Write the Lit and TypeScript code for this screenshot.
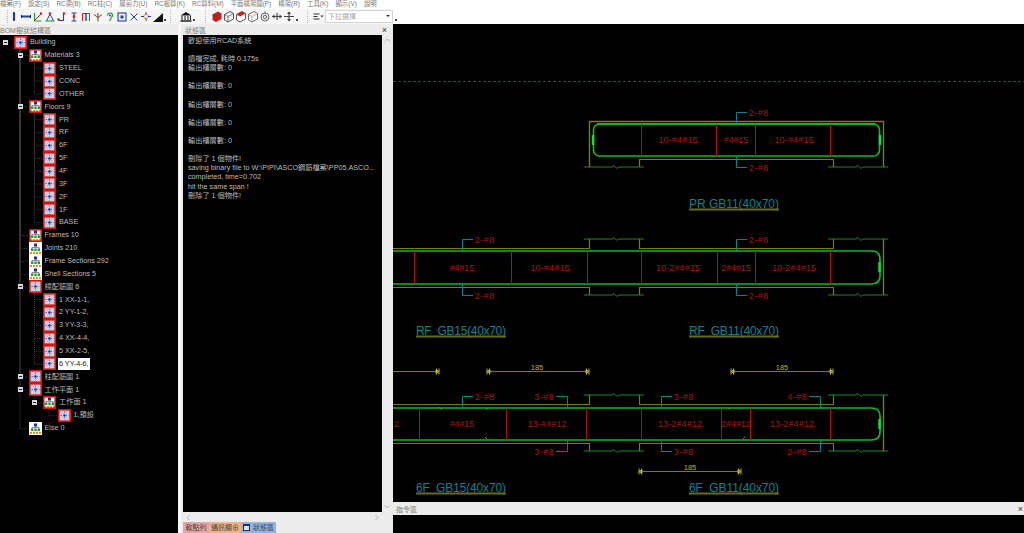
import { LitElement, css, html, svg, nothing } from 'lit';
import { customElement } from 'lit/decorators.js';

type Node = { label: string; level: number; icon: 'spark' | 'tree'; red?: boolean; exp?: boolean; sel?: boolean };

const nodes: Node[] = [
  { label: 'Building', level: 0, icon: 'spark', red: true, exp: true },
  { label: 'Materials 3', level: 1, icon: 'tree', red: true, exp: true },
  { label: 'STEEL', level: 2, icon: 'spark', red: true },
  { label: 'CONC', level: 2, icon: 'spark', red: true },
  { label: 'OTHER', level: 2, icon: 'spark', red: true },
  { label: 'Floors 9', level: 1, icon: 'tree', red: true, exp: true },
  ...['PR', 'RF', '6F', '5F', '4F', '3F', '2F', '1F', 'BASE'].map(
    (label): Node => ({ label, level: 2, icon: 'spark', red: true })
  ),
  { label: 'Frames 10', level: 1, icon: 'tree', red: true },
  { label: 'Joints 210', level: 1, icon: 'tree' },
  { label: 'Frame Sections 292', level: 1, icon: 'tree' },
  { label: 'Shell Sections 5', level: 1, icon: 'tree' },
  { label: '樑配筋圖 6', level: 1, icon: 'spark', red: true, exp: true },
  { label: '1 XX-1-1,', level: 2, icon: 'spark', red: true },
  { label: '2 YY-1-2,', level: 2, icon: 'spark', red: true },
  { label: '3 YY-3-3,', level: 2, icon: 'spark', red: true },
  { label: '4 XX-4-4,', level: 2, icon: 'spark', red: true },
  { label: '5 XX-2-5,', level: 2, icon: 'spark', red: true },
  { label: '6 YY-4-6,', level: 2, icon: 'spark', red: true, sel: true },
  { label: '柱配筋圖 1', level: 1, icon: 'spark', red: true, exp: true },
  { label: '工作平面 1', level: 1, icon: 'spark', red: true, exp: true },
  { label: '工作面 1', level: 2, icon: 'tree', red: true, exp: true },
  { label: '1,預設', level: 3, icon: 'spark', red: true },
  { label: 'Else 0', level: 1, icon: 'tree' },
];

const ROW = 12.87;

const sparkIcon = svg`<rect x="-1" y="-1" width="13" height="13" fill="#ccd0e0"/>
  <path d="M5.5 1.5v8M1.5 5.5h8" stroke="#3a50d8" stroke-width=".8" stroke-dasharray="1.5 1"/>
  <path d="M3 3l5 5M8 3l-5 5" stroke="#a2aadc" stroke-width=".6"/>
  <rect x="4.6" y="4.6" width="1.8" height="1.8" fill="#1424c4"/>`;

const treeIcon = svg`<rect x="-1" y="-1" width="13" height="13" fill="#fff"/>
  <rect x="4" y="0.5" width="3" height="3" fill="#1a2a9a"/>
  <path d="M5.5 3.5v1M2 6V4.5h7V6" stroke="#444" stroke-width=".6" fill="none"/>
  <rect x="1" y="5.5" width="2.4" height="2.6" fill="#18a030"/>
  <rect x="4.3" y="5.5" width="2.4" height="2.6" fill="#18a030"/>
  <rect x="7.6" y="5.5" width="2.4" height="2.6" fill="#18a030"/>
  <path d="M0 10h11" stroke="#e89020" stroke-width="1.8" stroke-dasharray="2 1"/>`;

@customElement('rcad-tree')
class RcadTree extends LitElement {
  static styles = css`
    :host {
      display: block;
      position: relative;
      height: 100%;
      background: #000;
      padding-top: 1px;
      box-sizing: border-box;
      overflow: hidden;
    }
    .guides {
      position: absolute;
      left: 0;
      top: 1px;
    }
    .row {
      position: relative;
      display: flex;
      align-items: center;
      height: 12.87px;
      font-size: 7.2px;
      color: #bcbcbc;
      white-space: nowrap;
    }
    .exp {
      width: 5px;
      height: 5px;
      margin-right: 6px;
      background: #d8d8e0;
      flex: none;
      position: relative;
    }
    .exp.none {
      background: none;
    }
    .exp:not(.none)::after {
      content: '';
      position: absolute;
      left: 1px;
      right: 1px;
      top: 2px;
      height: 1px;
      background: #222;
    }
    .icon {
      width: 13px;
      height: 13px;
      flex: none;
      margin-right: 2px;
      display: block;
    }
    .label {
      padding: 0 1px;
      line-height: 12px;
    }
    .label.sel {
      background: #fff;
      color: #222;
    }
  `;

  guides() {
    const out: unknown[] = [];
    const y = (i: number) => 6.5 + i * ROW;
    nodes.forEach((n, i) => {
      if (n.level === 0) return;
      let p = i - 1;
      while (nodes[p].level >= n.level) p--;
      const x = 5.5 + 14.5 * n.level;
      out.push(svg`<path d="M${x} ${y(p)}V${y(i)}H${x + 8}"/>`);
    });
    return out;
  }

  render() {
    return html`
      <svg class="guides" width="178" height="440" fill="none" stroke="#3d3d3d" stroke-dasharray="1 1">
        ${this.guides()}
      </svg>
      ${nodes.map(
        (n) => html`<div class="row" style="padding-left:${3 + 14.5 * n.level}px">
          <span class="exp ${n.exp ? '' : 'none'}"></span>
          <svg class="icon" viewBox="-1 -1 13 13">
            ${n.icon === 'spark' ? sparkIcon : treeIcon}
            ${n.red
              ? svg`<rect x="-.2" y="-.2" width="11.4" height="11.4" fill="none" stroke="#e01010" stroke-width="1.6"/>`
              : nothing}
          </svg>
          <span class="label ${n.sel ? 'sel' : ''}">${n.label}</span>
        </div>`
      )}
    `;
  }
}

const RED = '#a81414';
const TEAL = '#0d828e';
const OLIVE = '#7d7a18';
const GREEN = '#0fb82a';
const RAIL = '#158f1e';

function red(x: number, y: number, t: string, anchor = 'middle') {
  return svg`<text x=${x} y=${y + 3.5} fill=${RED} text-anchor=${anchor} textLength=${t.length * 4.9}
    lengthAdjust="spacing" font-size="9">${t}</text>`;
}

function title(x: number, y: number, t: string) {
  return svg`<text x=${x} y=${y + 4.5} fill=${TEAL} textLength="90" lengthAdjust="spacing"
    font-size="12" xml:space="preserve">${t}</text>
    <path d="M${x} ${y + 6.5}h90" stroke="#6e6a14" stroke-width="2"/>`;
}

function rail(x: number, y: number) {
  return svg`<path d="M${x} ${y}h28l2 -1.5l3 3l2 -1.5h25" stroke=${RAIL} fill="none"/>`;
}

// teal leader leaving the beam at (x,y0), turning at y1 and ending at x2, with its bar callout
function leader(x: number, y0: number, y1: number, x2: number, t: string) {
  const right = x2 > x;
  return svg`<path d="M${x + 0.5} ${y0}V${y1 + 0.5}H${x2}" stroke=${TEAL} fill="none"/>
    ${red(right ? x2 + 11.5 : x2 - 12, y1 + 0.5, t)}`;
}

function dim(x0: number, x1: number, y: number, label?: number) {
  return svg`<path d="M${x0} ${y + 0.5}H${x1}" stroke=${OLIVE} fill="none"/>
    <path d="M${x1 - 2.5} ${y - 2.5}v6M${x1} ${y - 2.5}v6M${x1} ${y + 0.5}l-3 -2v4z" stroke="#b9b42a" fill="none"/>
    ${x0 > 393
      ? svg`<path d="M${x0 + 2.5} ${y - 2.5}v6M${x0} ${y - 2.5}v6M${x0} ${y + 0.5}l3 -2v4z" stroke="#b9b42a" fill="none"/>`
      : nothing}
    ${label !== undefined
      ? svg`<text x=${label} y=${y - 1.5} fill="#b9b42a" text-anchor="middle" font-size="7.5">185</text>`
      : nothing}`;
}

// open beam body shared by the RF and 6F rows; only the right end is drawn closed
function beam(top: number, bottom: number, gTop: number, gBottom: number, reds: number[]) {
  const railTop = top - 9;
  const railBottom = bottom + 8;
  return svg`
    <path d="M0 ${top + 0.5}H196.5V${railTop}M246.5 ${railTop}V${top + 0.5}H440.5V${railTop}" stroke=${OLIVE} fill="none" stroke-width="1.2"/>
    <path d="M0 ${bottom + 0.5}H196.5V${railBottom}M246.5 ${railBottom}V${bottom + 0.5}H440.5V${railBottom}" stroke=${OLIVE} fill="none" stroke-width="1.2"/>
    <path d="M490.5 ${railTop}V${railBottom}" stroke=${OLIVE} stroke-width="1.4"/>
    ${rail(191, railTop)}${rail(191, railBottom)}${rail(435, railTop)}${rail(435, railBottom)}
    <path d="M0 ${gTop}H478Q487 ${gTop} 487 ${gTop + 8}V${gBottom - 8}Q487 ${gBottom} 478 ${gBottom}H0" stroke=${GREEN} stroke-width="1.7" fill="none"/>
    <path d="M486.5 ${gTop + 11}v10" stroke="#12e030" stroke-width="2.4"/>
    ${reds.map((x) => svg`<path d="M${x - 392.5} ${gTop}V${gBottom}" stroke=${RED}/>`)}
  `;
}

@customElement('rcad-canvas')
class RcadCanvas extends LitElement {
  static styles = css`
    :host {
      display: block;
      flex: 1;
      background: #000;
      overflow: hidden;
    }
    svg {
      display: block;
      font-family: 'Liberation Sans', sans-serif;
    }
  `;

  render() {
    // viewBox uses page coordinates so the callouts read like the drawing's own positions
    return html`<svg width="631" height="478" viewBox="393 24 631 478">
      <path d="M393 81.5H1024" stroke="#2c4a44" stroke-dasharray="3 2"/>

      <path d="M589.5 167V121.5H883.5V167" stroke=${OLIVE} stroke-width="1.4" fill="none"/>
      <path d="M639.5 167V159.5H833.5V167" stroke=${OLIVE} stroke-width="1.2" fill="none"/>
      <rect x="593.5" y="124" width="286" height="32" rx="6" stroke=${GREEN} stroke-width="1.7" fill="none"/>
      <path d="M597 124H875" stroke=${GREEN} stroke-width="2.2"/>
      <path d="M593 135v10M880 135v10" stroke="#12e030" stroke-width="2.4"/>
      ${[641, 716, 755, 830].map((x) => svg`<path d="M${x + 0.5} 124V156" stroke=${RED}/>`)}
      ${rail(584, 167)}${rail(828, 167)}
      ${red(678, 139, '10-#4#15')}${red(736, 139, '#4#15')}${red(794, 139, '10-#4#15')}
      ${leader(736, 124, 112, 747, '2-#8')}${leader(736, 157, 167, 747, '2-#8')}
      ${title(689, 203, 'PR GB11(40x70)')}

      <g transform="translate(393 0)">${beam(248, 287, 251, 284, [414, 511, 587, 641, 717, 755, 830])}</g>
      ${red(462, 267, '#4#15')}${red(550, 267, '10-#4#15')}${red(678, 267, '10-2#4#15')}
      ${red(736, 267, '2#4#15')}${red(794, 267, '10-2#4#15')}
      ${leader(462, 251, 239, 473, '2-#8')}${leader(462, 284, 295, 473, '2-#8')}
      ${leader(736, 251, 239, 747, '2-#8')}${leader(736, 284, 295, 747, '2-#8')}
      ${title(416, 330, 'RF  GB15(40x70)')}${title(689, 330, 'RF  GB11(40x70)')}

      ${dim(393, 439, 371)}${dim(487, 589, 371, 537)}${dim(731, 833, 371, 782)}${dim(639, 741, 471, 690)}

      <g transform="translate(393 0)">${beam(404, 443, 408, 440, [419, 506, 586, 641, 721, 750, 830])}</g>
      <path d="M439 407l3 3M486 410l2 -2M485 437l2 2M729 410l1 -2M743 439l2 -2" stroke=${GREEN}/>
      ${red(394, 423, '2', 'start')}${red(462, 423, '#4#15')}${red(547, 423, '13-#4#12')}
      ${red(680, 423, '13-2#4#12')}${red(736, 423, '2#4#12')}${red(792, 423, '13-2#4#12')}
      ${leader(462, 408, 396, 473, '2-#8')}
      ${leader(567, 408, 396, 556, '3-#8')}${leader(567, 440, 451, 556, '3-#8')}
      ${leader(661, 408, 396, 672, '3-#8')}${leader(661, 440, 451, 672, '3-#8')}
      ${leader(820, 408, 396, 809, '4-#8')}${leader(820, 440, 451, 809, '2-#8')}
      ${title(416, 487, '6F  GB15(40x70)')}${title(689, 487, '6F  GB11(40x70)')}
    </svg>`;
  }
}

const tool = (body: unknown) =>
  html`<svg class="tool" width="12" height="13" viewBox="0 0 12 13" fill="none">${body}</svg>`;

const tools = [
  svg`<path d="M6 3v7" stroke="#1c3fb8" stroke-width="2.2"/><path d="M6 2v2M6 9v2" stroke="#222" stroke-width="1.4"/>`,
  svg`<path d="M2 6.5h8" stroke="#1c3fb8" stroke-width="2"/><path d="M1.5 5v3M10.5 5v3" stroke="#222"/>`,
  svg`<path d="M2.5 3v8h7" stroke="#1a9a2c" stroke-width="1.1"/><path d="M2.5 10.5L9 4" stroke="#d02020"/><circle cx="9" cy="3.5" r="1.2" fill="#d02020"/>`,
  svg`<path d="M2.5 11L6 4l3.5 7" stroke="#1c3fb8"/><path d="M1.5 11h9" stroke="#1a9a2c" stroke-width="1.1"/><circle cx="6" cy="3.5" r="1.3" fill="#d02020"/>`,
  svg`<path d="M3 10.5h4.5V4" stroke="#1c3fb8" stroke-width="1.1"/><circle cx="2.5" cy="9.5" r="1.3" fill="#d02020"/><circle cx="8" cy="3.5" r="1.3" fill="#d02020"/>`,
  svg`<path d="M6 3v8M3.5 11h5M3.5 3h5" stroke="#1c3fb8" stroke-width="1.1"/><circle cx="6" cy="6.5" r="1.4" fill="#d02020"/>`,
  svg`<path d="M2.5 11V3.5h7V11" stroke="#d02020"/><path d="M6 3.5V11" stroke="#1c3fb8" stroke-width="1.4"/>`,
  svg`<path d="M6 3v8.5" stroke="#1a9a2c" stroke-width="1.2"/><path d="M2 4.5l4 3 4-3" stroke="#d02020"/>`,
  svg`<path d="M3.5 5.5a2.5 2.5 0 1 1 5 0c0 2-2.5 2-2.5 5.5" stroke="#1a9a2c" stroke-width="1.2"/><circle cx="6" cy="5.5" r="1" fill="#1c3fb8"/>`,
  svg`<rect x="2" y="3" width="8" height="8" stroke="#1c3fb8" stroke-width="1.1"/><rect x="4.5" y="5.5" width="3" height="3" fill="#1c3fb8"/>`,
  svg`<path d="M2.5 3.5l7 7M9.5 3.5l-7 7" stroke="#2a3a90"/>`,
  svg`<circle cx="6" cy="6.5" r="2.2" stroke="#d8a020"/><path d="M1 6.5h3M8 6.5h3M6 2v2.5M6 8.5V11" stroke="#1c3fb8"/>`,
  svg`<path d="M1 12L11 3v9z" fill="#111"/>`,
];

const cubes = [
  svg`<path d="M1.5 4.5l5.5-3 3.5 2v5.5l-5.5 3-3.5-2z" fill="#d81818"/><path d="M1.5 4.5l3.5 2 5.5-3M5 6.5v5.5" stroke="#444" stroke-width=".7"/>`,
  svg`<path d="M1.5 4.5l5.5-3 3.5 2v5.5l-5.5 3-3.5-2z" fill="#eee" stroke="#555"/><path d="M1.5 4.5l3.5 2 5.5-3M5 6.5v5.5" stroke="#555" stroke-width=".7"/>`,
  svg`<path d="M1.5 4.5l5.5-3 3.5 2v5.5l-5.5 3-3.5-2z" fill="#fff" stroke="#555"/><path d="M1.5 4.5l5.5-3 3.5 2-5.5 3z" fill="#d81818"/>`,
  svg`<path d="M1.5 4.5l5.5-3 3.5 2v5.5l-5.5 3-3.5-2z" stroke="#666"/><path d="M1.5 4.5l3.5 2 5.5-3M5 6.5v5.5" stroke="#999" stroke-width=".7"/>`,
  svg`<circle cx="6" cy="7" r="4" stroke="#666"/><circle cx="6" cy="7" r="1.8" stroke="#666"/><path d="M6 1.5v2" stroke="#666"/>`,
  svg`<path d="M1 6.5h10M6 3v7" stroke="#444" stroke-width="1.1"/><path d="M1 6.5l2.5-2v4zM11 6.5l-2.5-2v4z" fill="#444"/>`,
  svg`<path d="M1 6.5h10M6 2v9" stroke="#444" stroke-width="1.1"/><path d="M6 1.5l-2 2.5h4zM6 11.5l-2-2.5h4z" fill="#444"/>`,
];

const chevron = (d: string) =>
  html`<svg width="7" height="7" viewBox="0 0 7 7" fill="none" stroke="#b4b4b4"><path d=${d}/></svg>`;

const menus = ['檔案(F)', '設定(S)', 'RC梁(B)', 'RC柱(C)', '層剪力(U)', 'RC板算(K)', 'RC算料(M)', '平面構架圖(P)', '構架(R)', '工具(K)', '顯示(V)', '說明'];

const log = [
  '歡迎使用RCAD系統',
  '',
  '讀檔完成, 耗時 0.175s',
  '輸出樓層數: 0',
  '',
  '輸出樓層數: 0',
  '',
  '輸出樓層數: 0',
  '',
  '輸出樓層數: 0',
  '',
  '輸出樓層數: 0',
  '',
  '刪除了 1 個物件!',
  'saving binary file to W:\\PIPI\\ASCO鋼筋檔案\\PP05.ASCO...',
  'completed, time=0.702',
  'hit the same span !',
  '刪除了 1 個物件!',
];

@customElement('app-root')
class AppRoot extends LitElement {
  static styles = css`
    :host {
      display: flex;
      flex-direction: column;
      width: 1024px;
      height: 533px;
      overflow: hidden;
      background: #fff;
      font-family: 'Liberation Sans', 'Noto Sans CJK TC', sans-serif;
    }
    .menu {
      display: flex;
      gap: 7.1px;
      height: 9px;
      flex: none;
      overflow: hidden;
      font-size: 6.4px;
      line-height: 8px;
      color: #777;
      white-space: nowrap;
    }
    .toolbar {
      display: flex;
      align-items: center;
      height: 15px;
      flex: none;
      padding-left: 7px;
      width: 400px;
      box-sizing: border-box;
      background: linear-gradient(90deg, #f6f6f6 393px, #fff 393px);
    }
    .tool {
      flex: none;
      display: block;
    }
    .dot {
      width: 2px;
      height: 2px;
      background: #444;
      margin-top: 7px;
      flex: none;
    }
    .d1 {
      margin-right: 4px;
    }
    .d2 {
      margin: 7px 10px 0 1px;
    }
    .d3 {
      margin: 7px 9px 0 1px;
    }
    .d4 {
      margin: 7px 0 0 2px;
    }
    .sep {
      width: 1px;
      height: 13px;
      flex: none;
      background: repeating-linear-gradient(#bbb 0 1px, transparent 1px 2px);
    }
    .s1 {
      margin-right: 9px;
    }
    .s2 {
      margin-right: 5px;
    }
    .s3 {
      margin-right: 4px;
    }
    .select {
      width: 68px;
      height: 13px;
      margin-left: 1px;
      box-sizing: border-box;
      border: 1px solid #d4d4d4;
      background: #fff;
      color: #aaa;
      font-size: 7px;
      line-height: 11px;
      padding-left: 2px;
      position: relative;
      flex: none;
    }
    .select::after {
      content: '';
      position: absolute;
      right: 2px;
      top: 4px;
      border: 2px solid transparent;
      border-top: 2px solid #333;
    }
    .main {
      flex: 1;
      display: flex;
      min-height: 0;
    }
    .tree-panel {
      width: 178px;
      flex: none;
      display: flex;
      flex-direction: column;
      background: #000;
    }
    .head {
      height: 11px;
      flex: none;
      display: flex;
      align-items: center;
      justify-content: space-between;
      font-size: 7px;
      color: #808080;
      background: #ececec;
      background-image: radial-gradient(#d4d4d4 0.5px, transparent 0.6px);
      background-size: 2px 2px;
      white-space: nowrap;
    }
    .head b {
      font-weight: 400;
    }
    .head i {
      font-style: normal;
      color: #333;
      font-size: 9px;
    }
    .tree-panel rcad-tree {
      flex: 1;
      min-height: 0;
    }
    .state-panel {
      width: 215px;
      flex: none;
      display: flex;
      flex-direction: column;
      box-sizing: border-box;
      padding-left: 2px;
      background: #ececec;
      border-left: 3px solid #f8f8f8;
    }
    .state-panel .head {
      padding: 0 6px 0 2px;
    }
    .state-body {
      flex: 1;
      min-height: 0;
      display: grid;
      grid-template-columns: 199px 11px;
      grid-template-rows: 1fr 10px;
    }
    .log {
      background: #000;
      color: #bdbdbd;
      font-size: 7.2px;
      line-height: 9.1px;
      padding: 1px 0 0 5px;
      white-space: pre;
      overflow: hidden;
      min-height: 0;
    }
    .vbar,
    .hbar {
      display: flex;
      justify-content: space-between;
      align-items: center;
    }
    .vbar {
      flex-direction: column;
      padding: 2px 0;
    }
    .hbar {
      padding: 0 2px;
    }
    .tabs {
      display: flex;
      height: 11px;
      flex: none;
      font-size: 7px;
      line-height: 11px;
      color: #444;
      white-space: nowrap;
    }
    .tabs span {
      display: flex;
      align-items: center;
      justify-content: center;
      gap: 3px;
    }
    .t1 {
      background: #e9a2a2;
      width: 26px;
    }
    .t2 {
      background: #f0b080;
      width: 32px;
    }
    .t3 {
      background: #92b2e6;
      width: 35px;
    }
    .t3 em {
      display: block;
      width: 5px;
      height: 4px;
      border: 1px solid #234;
      border-top-width: 2px;
      background: #dde;
    }
    .right {
      flex: 1;
      min-width: 0;
      display: flex;
      flex-direction: column;
      background: #000;
    }
    .cmd {
      height: 13px;
      margin-bottom: 18px;
      padding: 0 1px 0 3px;
    }
  `;

  render() {
    return html`
      <div class="menu">${menus.map((m) => html`<span>${m}</span>`)}</div>
      <div class="toolbar">
        <span class="sep"></span>
        ${tools.map(tool)}
        <span class="dot d1"></span>
        <span class="sep s1"></span>
        ${tool(svg`<path d="M6 2l5.5 3.5H.5z" fill="#111"/><path d="M2 6v4M5 6v4M8 6v4M10.5 6v4" stroke="#111"/><path d="M.5 11h11" stroke="#111" stroke-width="1.4"/>`)}
        <span class="dot d2"></span>
        <span class="sep s2"></span>
        ${cubes.map(tool)}
        <span class="dot d3"></span>
        <span class="sep s3"></span>
        ${tool(svg`<path d="M1.5 4h6M1.5 6.5h4M1.5 9h6" stroke="#333"/><path d="M8.5 5.5h3l-1.5 2z" fill="#333"/>`)}
        <div class="select">下拉選擇</div>
        <span class="dot d4"></span>
      </div>
      <div class="main">
        <div class="tree-panel">
          <div class="head"><b>BOM樹狀結構區</b></div>
          <rcad-tree></rcad-tree>
        </div>
        <div class="state-panel">
          <div class="head"><b>狀態區</b><i>×</i></div>
          <div class="state-body">
            <div class="log">${log.map((l) => html`${l}\n`)}</div>
            <div class="vbar">${chevron('M1 4.5l2.5-2.5 2.5 2.5')}${chevron('M1 2.5l2.5 2.5 2.5-2.5')}</div>
            <div class="hbar">${chevron('M4.5 1L2 3.5l2.5 2.5')}${chevron('M2.5 1L5 3.5 2.5 6')}</div>
          </div>
          <div class="tabs">
            <span class="t1">軟點列</span>
            <span class="t2">通訊欄⊕</span>
            <span class="t3"><em></em>狀態區</span>
          </div>
        </div>
        <div class="right">
          <rcad-canvas></rcad-canvas>
          <div class="head cmd"><b>指令區</b><i>×</i></div>
        </div>
      </div>
    `;
  }
}

declare global {
  interface HTMLElementTagNameMap {
    'app-root': AppRoot;
    'rcad-tree': RcadTree;
    'rcad-canvas': RcadCanvas;
  }
}
